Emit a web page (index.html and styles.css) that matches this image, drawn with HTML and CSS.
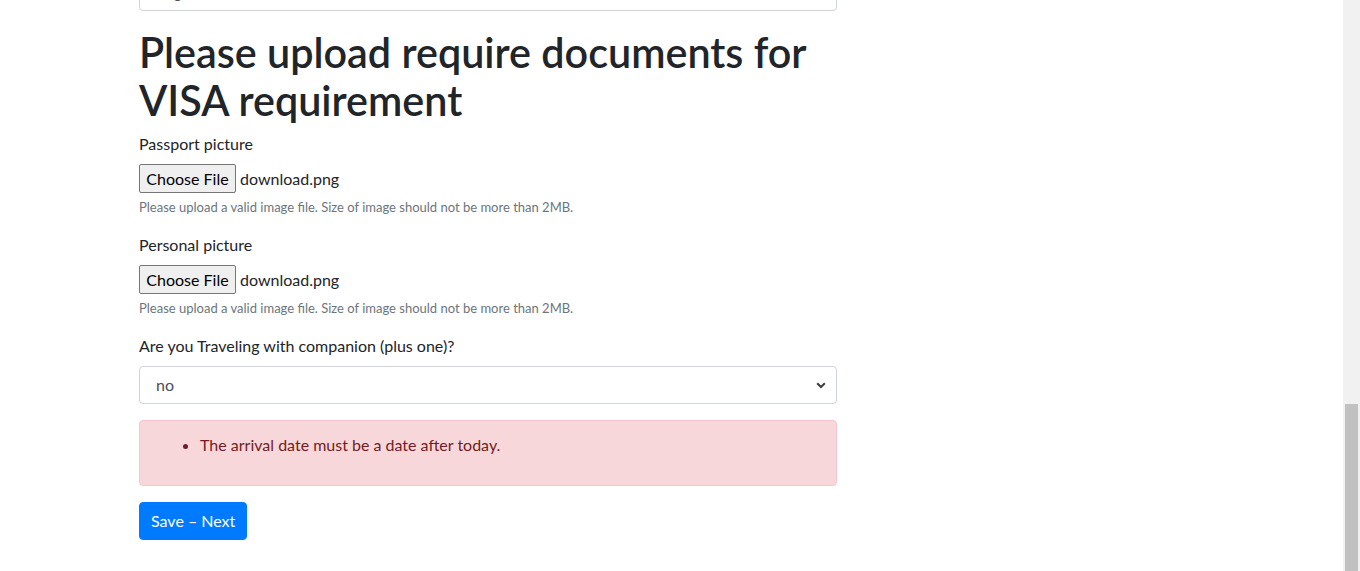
FILE: index.html
```
<!DOCTYPE html>
<html lang="en">
<head>
<meta charset="utf-8">
<title>Visa documents</title>
<link rel="stylesheet" href="styles.css">
</head>
<body>
<div class="viewport">
  <main class="page">
    <form class="form">
      <div class="form-group top-group">
        <div class="form-control top-field">Single</div>
      </div>

      <h1 class="title">Please upload require documents for VISA requirement</h1>

      <div class="form-group">
        <label class="label">Passport picture</label>
        <div class="file-row">
          <button type="button" class="file-btn">Choose File</button>
          <span class="file-name">download.png</span>
        </div>
        <small class="help">Please upload a valid image file. Size of image should not be more than 2MB.</small>
      </div>

      <div class="form-group">
        <label class="label">Personal picture</label>
        <div class="file-row">
          <button type="button" class="file-btn">Choose File</button>
          <span class="file-name">download.png</span>
        </div>
        <small class="help">Please upload a valid image file. Size of image should not be more than 2MB.</small>
      </div>

      <div class="form-group">
        <label class="label">Are you Traveling with companion (plus one)?</label>
        <div class="form-control select">
          <span class="select-value">no</span>
          <svg class="chevron" width="10" height="7" viewBox="0 0 10 7"><path d="M1.2 1.3 L5 5 L8.8 1.3" fill="none" stroke="#3b3b3b" stroke-width="2"/></svg>
        </div>
      </div>

      <div class="alert">
        <ul class="alert-list">
          <li>The arrival date must be a date after today.</li>
        </ul>
      </div>

      <button type="button" class="btn-primary">Save – Next</button>
    </form>
  </main>
  <div class="scrollbar"><div class="thumb"></div></div>
</div>
</body>
</html>
```
FILE: styles.css
```
html, body {
  margin: 0;
  padding: 0;
  height: 571px;
  overflow: hidden;
  background: #fff;
}
body {
  font-family: Lato, "Liberation Sans", sans-serif;
  font-size: 16px;
  line-height: 24px;
  color: #212529;
}
.viewport {
  display: flex;
  height: 571px;
}
.page {
  flex: 1;
  padding-left: 139px;
}
.form {
  width: 698px;
}
.form-group {
  margin-bottom: 16px;
}
.top-group {
  margin-top: -27px;
  margin-bottom: 17px;
}
.form-control {
  box-sizing: border-box;
  height: 38px;
  border: 1px solid #ced4da;
  border-radius: 4px;
  padding: 6px 12px;
  color: #495057;
  background: #fff;
}
.title {
  margin: 0 0 8px;
  font-size: 41.3px;
  font-weight: 600;
  line-height: 48px;
  color: #212529;
}
.label {
  display: block;
  margin-bottom: 8px;
}
.file-row {
  display: flex;
  align-items: center;
  height: 30px;
}
.file-btn {
  box-sizing: border-box;
  width: 97px;
  height: 29px;
  margin: 0 4px 1px 0;
  padding: 0;
  font-family: inherit;
  font-size: 16px;
  color: #000;
  background: #efefef;
  border: 1px solid #767676;
  border-radius: 2px;
}
.file-name {
  color: #212529;
}
.help {
  display: block;
  margin-top: 4px;
  font-size: 13px;
  line-height: 19.2px;
  color: #6c757d;
}
.select {
  display: flex;
  align-items: center;
  justify-content: space-between;
  padding: 6px 10px 6px 16px;
}
.select-value {
  color: #495057;
}
.chevron {
  display: block;
}
.alert {
  box-sizing: border-box;
  height: 66px;
  margin-bottom: 16px;
  padding: 12px 20px;
  border: 1px solid #f5c6cb;
  border-radius: 4px;
  background: #f8d7da;
  color: #721c24;
}
.alert-list {
  margin: 0;
  padding-left: 40px;
}
.btn-primary {
  box-sizing: border-box;
  height: 38px;
  padding: 6px 11px;
  font-family: inherit;
  font-size: 16px;
  line-height: 24px;
  color: #fff;
  background: #007bff;
  border: 1px solid #007bff;
  border-radius: 4px;
}
.scrollbar {
  width: 17px;
  height: 571px;
  background: #f1f1f1;
  padding-top: 404px;
  box-sizing: border-box;
}
.thumb {
  margin: 0 2px;
  height: 167px;
  background: #c1c1c1;
}
```
